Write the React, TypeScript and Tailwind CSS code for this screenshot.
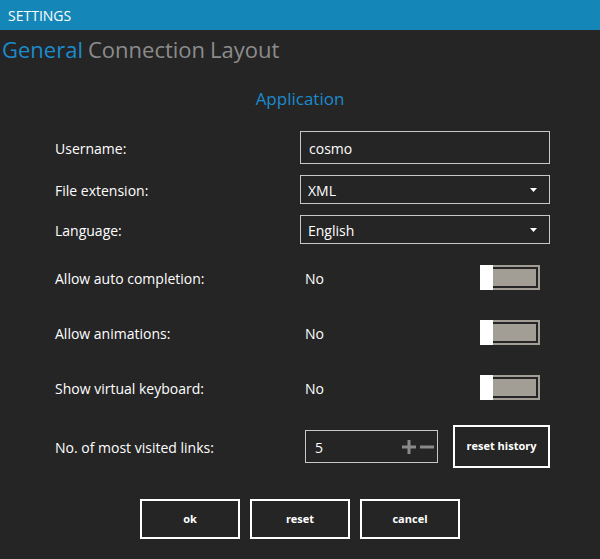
import React from 'react';

const font = { fontFamily: '"Open Sans", "Liberation Sans", sans-serif' };

const Label: React.FC<{ text: string }> = ({ text }) => (
  <div className="w-[245px] text-[14px] text-white pt-[1px]">{text}</div>
);

const Toggle: React.FC = () => (
  <div className="relative w-[60px] h-[25px] bg-[#a39e95] p-[2px]">
    <div className="h-full border-2 border-[#252525] bg-[#a39e95]" />
    <div className="absolute left-0 top-0 w-[13px] h-full bg-white" />
  </div>
);

const Select: React.FC<{ value: string }> = ({ value }) => (
  <div className="w-[250px] h-[29px] border border-[#c8c8c8] flex items-center justify-between pl-[7px] pr-[12px] text-[14px] text-white">
    <span className="pt-[1px]">{value}</span>
    <svg width="7" height="4" viewBox="0 0 7 4">
      <path d="M0 0h7L3.5 4z" fill="#ffffff" />
    </svg>
  </div>
);

const ToggleRow: React.FC<{ label: string; top: string }> = ({ label, top }) => (
  <div className={`flex items-center h-[25px] ${top}`}>
    <Label text={label} />
    <div className="w-[250px] flex items-center justify-between pl-[5px] pr-[10px]">
      <span className="text-[14px] text-white pt-[1px]">No</span>
      <Toggle />
    </div>
  </div>
);

export default function App() {
  return (
    <div className="w-[600px] h-[559px] bg-[#252525] flex flex-col" style={font}>
      <div className="h-[30px] bg-[#1487b8] flex items-center pl-[8px] text-[14px] text-white">
        SETTINGS
      </div>
      <div className="flex items-center gap-[5px] pl-[2px] h-[38px] text-[22px]">
        <span className="text-[#1b8bcd]">General</span>
        <span className="text-[#8c8c8c]">Connection</span>
        <span className="text-[#8c8c8c]">Layout</span>
      </div>
      <div className="mt-[18px] text-center text-[17px] text-[#1b8bcd] leading-[26px]">Application</div>

      <div className="flex flex-col pl-[55px] mt-[19px]">
        <div className="flex items-center">
          <Label text="Username:" />
          <div className="w-[250px] h-[33px] border border-[#c8c8c8] flex items-center pl-[8px] pt-[1px] text-[14px] text-white">
            cosmo
          </div>
        </div>
        <div className="flex items-center mt-[11px]">
          <Label text="File extension:" />
          <Select value="XML" />
        </div>
        <div className="flex items-center mt-[11px]">
          <Label text="Language:" />
          <Select value="English" />
        </div>

        <ToggleRow label="Allow auto completion:" top="mt-[21px]" />
        <ToggleRow label="Allow animations:" top="mt-[30px]" />
        <ToggleRow label="Show virtual keyboard:" top="mt-[30px]" />

        <div className="flex items-center mt-[25px]">
          <Label text="No. of most visited links:" />
          <div className="w-[250px] flex items-center justify-between pl-[5px]">
            <div className="w-[133px] h-[33px] border border-[#c8c8c8] flex items-center justify-between pl-[9px] pr-[2px] text-[14px] text-white">
              <span className="pt-[1px]">5</span>
              <svg width="34" height="14" viewBox="0 0 34 14">
                <path d="M1 7h14M8 0v14M19 7h14" stroke="#8a8a8a" strokeWidth="3" />
              </svg>
            </div>
            <button className="w-[97px] h-[43px] border-2 border-white text-[11px] font-bold text-white">
              reset history
            </button>
          </div>
        </div>
      </div>

      <div className="flex justify-center gap-[10px] mt-[31px]">
        {['ok', 'reset', 'cancel'].map((b) => (
          <button key={b} className="w-[100px] h-[40px] border-2 border-white text-[11px] font-bold text-white">
            {b}
          </button>
        ))}
      </div>
    </div>
  );
}
